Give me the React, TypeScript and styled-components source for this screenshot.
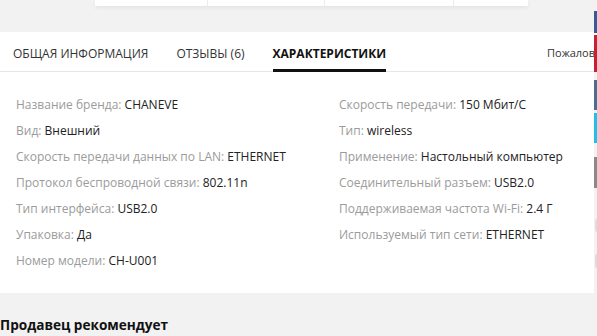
import React, { useState } from "react";
import styled, { createGlobalStyle } from "styled-components";

const GlobalStyle = createGlobalStyle`
  html, body {
    margin: 0;
    padding: 0;
    background: #f2f2f2;
    font-family: "Open Sans", "Liberation Sans", sans-serif;
    overflow: hidden;
  }
`;

interface Spec {
    label: string;
    value: string;
}

const leftSpecs: Spec[] = [
    { label: "Название бренда", value: "CHANEVE" },
    { label: "Вид", value: "Внешний" },
    { label: "Скорость передачи данных по LAN", value: "ETHERNET" },
    { label: "Протокол беспроводной связи", value: "802.11n" },
    { label: "Тип интерфейса", value: "USB2.0" },
    { label: "Упаковка", value: "Да" },
    { label: "Номер модели", value: "CH-U001" },
];

const rightSpecs: Spec[] = [
    { label: "Скорость передачи", value: "150 Мбит/С" },
    { label: "Тип", value: "wireless" },
    { label: "Применение", value: "Настольный компьютер" },
    { label: "Соединительный разъем", value: "USB2.0" },
    { label: "Поддерживаемая частота Wi-Fi", value: "2.4 Г" },
    { label: "Используемый тип сети", value: "ETHERNET" },
];

const tabs = ["ОБЩАЯ ИНФОРМАЦИЯ", "ОТЗЫВЫ (6)", "ХАРАКТЕРИСТИКИ"];

const Page = styled.div`
  width: 594px;
  display: flex;
  flex-direction: column;
`;

const TopCard = styled.div`
  margin-left: 95px;
  width: 433px;
  height: 6px;
  display: flex;
  background: #fff;
  box-shadow: 0 2px 4px rgba(0, 0, 0, 0.06);
`;

const TopCell = styled.div<{ $w: number }>`
  width: ${(p) => p.$w}px;
  border-right: 1px solid #ececec;

  &:last-child {
    border-right: none;
  }
`;

const GrayGap = styled.div<{ $h: number }>`
  height: ${(p) => p.$h}px;
`;

const Panel = styled.section`
  background: #fff;
  height: 261px;
  display: flex;
  flex-direction: column;
`;

const TabBar = styled.nav`
  height: 39px;
  display: flex;
  align-items: stretch;
  border-bottom: 1px solid #e6e6e6;
  padding-left: 13px;
`;

const Tab = styled.button<{ $active?: boolean }>`
  background: none;
  border: none;
  padding: 0;
  margin-right: 28px;
  font-family: inherit;
  font-size: 12px;
  color: ${(p) => (p.$active ? "#111" : "#333")};
  font-weight: ${(p) => (p.$active ? 700 : 400)};
  border-bottom: 3px solid ${(p) => (p.$active ? "#111" : "transparent")};
  margin-bottom: -1px;
  padding-top: 5px;
  cursor: pointer;
`;

const Report = styled.span`
  margin-left: auto;
  align-self: center;
  font-size: 11px;
  color: #333;
  padding-top: 2px;
  white-space: nowrap;
  overflow: hidden;
  width: 47px;
`;

const SpecGrid = styled.div`
  display: grid;
  grid-template-columns: 323px 1fr;
  padding: 19px 0 0 16px;
`;

const SpecColumn = styled.ul`
  list-style: none;
  margin: 0;
  padding: 0;
  display: flex;
  flex-direction: column;
`;

const SpecRow = styled.li`
  height: 26px;
  display: flex;
  align-items: center;
  font-size: 12px;
  white-space: nowrap;
`;

const Label = styled.span`
  color: #9b9b9b;
`;

const Value = styled.span`
  color: #222;
`;

const Recommend = styled.h2`
  margin: 0;
  padding-top: 22px;
  font-size: 13.6px;
  font-weight: 700;
  color: #111;
`;

const ShareBar = styled.div`
  position: fixed;
  left: 594px;
  top: 0;
  width: 12px;
  display: flex;
  flex-direction: column;
`;

const ShareBtn = styled.span<{ $color: string; $top: number; $h: number; $round?: boolean }>`
  display: block;
  margin-top: ${(p) => p.$top}px;
  height: ${(p) => p.$h}px;
  background: ${(p) => p.$color};
  border-radius: ${(p) => (p.$round ? "8px" : "0")};
  margin-left: ${(p) => (p.$round ? "1px" : "0")};
`;

const App = () => {
    const [active, setActive] = useState(2);

    return (
        <>
            <GlobalStyle />
            <Page>
                <TopCard>
                    <TopCell $w={113} />
                    <TopCell $w={117} />
                    <TopCell $w={128} />
                    <TopCell $w={75} />
                </TopCard>
                <GrayGap $h={26} />
                <Panel>
                    <TabBar>
                        {tabs.map((t, i) => (
                            <Tab key={t} $active={i === active} onClick={() => setActive(i)}>
                                {t}
                            </Tab>
                        ))}
                        <Report>Пожаловаться</Report>
                    </TabBar>
                    <SpecGrid>
                        <SpecColumn>
                            {leftSpecs.map((s) => (
                                <SpecRow key={s.label}>
                                    <Label>{s.label}:&nbsp;</Label>
                                    <Value>{s.value}</Value>
                                </SpecRow>
                            ))}
                        </SpecColumn>
                        <SpecColumn>
                            {rightSpecs.map((s) => (
                                <SpecRow key={s.label}>
                                    <Label>{s.label}:&nbsp;</Label>
                                    <Value>{s.value}</Value>
                                </SpecRow>
                            ))}
                        </SpecColumn>
                    </SpecGrid>
                </Panel>
                <Recommend>Продавец рекомендует</Recommend>
            </Page>
            <ShareBar>
                <ShareBtn $color="#3b5998" $top={11} $h={22} />
                <ShareBtn $color="#c8202f" $top={2} $h={37} />
                <ShareBtn $color="#4c6c91" $top={8} $h={30} />
                <ShareBtn $color="#1fc1e8" $top={3} $h={30} />
                <ShareBtn $color="#8a8a8a" $top={14} $h={31} />
                <ShareBtn $color="#dcdcdc" $top={29} $h={17} $round />
                <ShareBtn $color="#dcdcdc" $top={18} $h={18} $round />
            </ShareBar>
        </>
    );
};

export default App;
